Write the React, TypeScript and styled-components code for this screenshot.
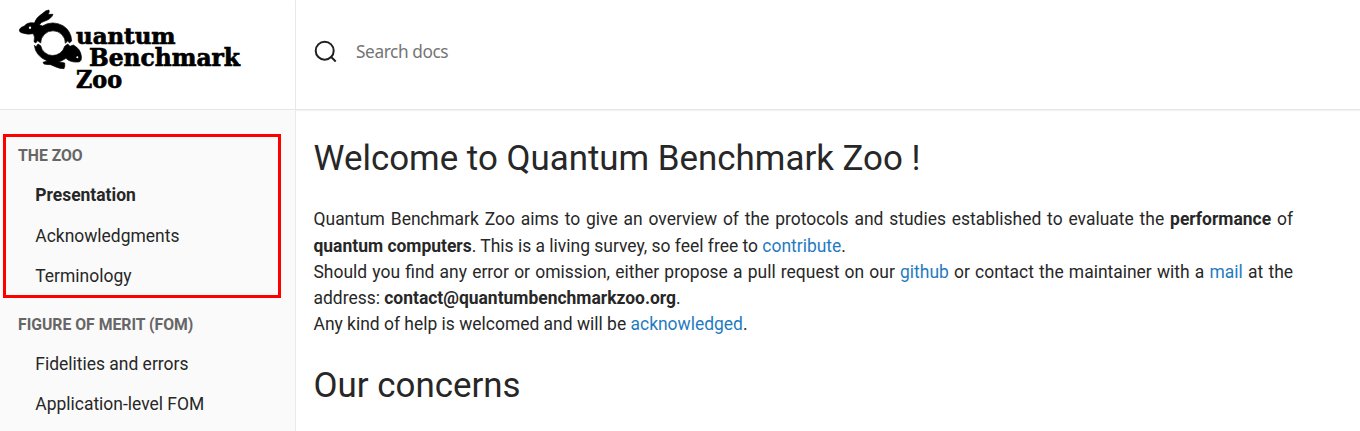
import React from "react";
import styled, { createGlobalStyle } from "styled-components";

const GlobalStyle = createGlobalStyle`
  *, *::before, *::after { box-sizing: border-box; }
  body {
    margin: 0;
    overflow: hidden;
    background: #fff;
    color: #272727;
    font: 17.47px/26.2px Roboto, sans-serif;
  }
`;

const Page = styled.div`
  display: grid;
  grid-template-columns: 296px 1fr;
  grid-template-rows: 110px 321px;
  height: 431px;
  overflow: hidden;
`;

const Brand = styled.header`
  border-right: 1px solid #eaeaea;
  border-bottom: 1px solid #e6e6e6;
`;

const SearchBar = styled.label`
  display: flex;
  align-items: center;
  gap: 18px;
  padding: 0 0 6px 18px;
  border-bottom: 1px solid #e6e6e6;
  box-shadow: 0 1px 1px rgba(0, 0, 0, 0.05);
`;

const SearchInput = styled.input`
  flex: 1;
  padding: 0;
  border: 0;
  outline: 0;
  background: transparent;
  color: #272727;
  font: 17.3px/26px "Noto Sans", sans-serif;
  letter-spacing: -0.42px;
  &::placeholder { color: #757575; opacity: 1; }
`;

const Sidebar = styled.nav`
  padding: 24px 14px 0 3px;
  border-right: 1px solid #eaeaea;
  background: #fafafa;
  overflow: hidden;
`;

const NavGroup = styled.section<{ $outlined?: boolean }>`
  height: 164px;
  padding: 6px 0 0 12px;
  border: 3px solid ${(p) => (p.$outlined ? "#fe0000" : "transparent")};
  & + & { margin-top: 4.65px; }
`;

const NavTitle = styled.h2`
  margin: 0 0 6.3px;
  color: #666;
  font-size: 15.75px;
  font-weight: 700;
  line-height: 26px;
`;

const NavLink = styled.a<{ $active?: boolean }>`
  display: block;
  padding: 7px 0 7px 17.3px;
  color: #272727;
  font-weight: ${(p) => (p.$active ? 700 : 400)};
  line-height: 26.3px;
  text-decoration: none;
`;

const Content = styled.main`
  padding: 22px 67px 0 17.5px;
  overflow: hidden;
`;

const Heading = styled.h1`
  margin: 0 0 21.38px;
  font-size: 34.9px;
  font-weight: 400;
  line-height: 53px;
`;

const Intro = styled.p`
  margin: 0 0 21.3px;
  text-align: justify;
`;

const Link = styled.a`
  color: #1f7bc1;
  text-decoration: none;
`;

const LogoImage = styled.svg`
  display: block;
  width: 250px;
  height: 100px;
`;

const Logo = () => (
  <LogoImage viewBox="0 0 250 100" role="img" aria-label="Quantum Benchmark Zoo">
    <g transform="translate(10 0) scale(.33333)">
      <g stroke="#000" strokeWidth="2" strokeLinejoin="round">
        <path d="M28 90 Q30 82 43 78 Q54 65 73 69 Q77 54 98 40 Q108 30 117 30 Q120 36 114 43 L129 43 Q124 57 105 63 Q93 66 88 74 L97 78 Q127 60 159 77 Q184 93 185 123 L178 129 L174 122 L166 130 A37 37 0 0 0 92 129 L83 122 L77 129 L72 125 Q76 111 70 101 Q52 105 34 98 Q28 96 28 90 Z" />
        <path d="M73 136 L78 140 L84 132 L92 137 A37 37 0 0 0 164 139 L173 132 L180 139 L190 135 Q211 146 214 168 Q216 186 204 186 Q181 188 168 175 Q155 184 145 185 L164 189 Q166 199 162 206 Q148 206 138 201 L122 194 Q110 194 102 192 L99 187 L112 183 Q76 168 73 136 Z" />
      </g>
      <circle cx="60" cy="83" r="3.5" fill="#fff" />
      <circle cx="202" cy="172" r="3" fill="#fff" />
    </g>
    <g fontFamily="'DejaVu Serif', serif" fontWeight="700" fontSize="23.5" stroke="#000" strokeWidth=".7">
      <text x="76" y="44" fontSize="22" textLength="99.5" lengthAdjust="spacingAndGlyphs">uantum</text>
      <text x="89" y="66" textLength="151" lengthAdjust="spacingAndGlyphs">Benchmark</text>
      <text x="76" y="88" textLength="46" lengthAdjust="spacingAndGlyphs">Zoo</text>
    </g>
  </LogoImage>
);

const SearchIcon = () => (
  <svg width="24" height="24" viewBox="0 0 24 24" fill="none" stroke="#202020" strokeWidth="2">
    <circle cx="10.7" cy="10.7" r="9" />
    <path d="m16.7 16.5 5 5" />
  </svg>
);

const groups = [
  { title: "THE ZOO", outlined: true, items: ["Presentation", "Acknowledgments", "Terminology"] },
  { title: "FIGURE OF MERIT (FOM)", outlined: false, items: ["Fidelities and errors", "Application-level FOM"] },
];

export default function App() {
  return (
    <>
      <GlobalStyle />
      <Page>
        <Brand><Logo /></Brand>
        <SearchBar>
          <SearchIcon />
          <SearchInput placeholder="Search docs" />
        </SearchBar>
        <Sidebar>
          {groups.map((group) => (
            <NavGroup key={group.title} $outlined={group.outlined}>
              <NavTitle>{group.title}</NavTitle>
              {group.items.map((item) => (
                <NavLink key={item} $active={item === "Presentation"}>{item}</NavLink>
              ))}
            </NavGroup>
          ))}
        </Sidebar>
        <Content>
          <Heading>Welcome to Quantum Benchmark Zoo !</Heading>
          <Intro>
            Quantum Benchmark Zoo aims to give an overview of the protocols and studies established to evaluate
            the <b>performance</b> of <b>quantum computers</b>. This is a living survey, so feel free
            to <Link>contribute</Link>.
            <br />
            Should you find any error or omission, either propose a pull request on our <Link>github</Link> or
            contact the maintainer with a <Link>mail</Link> at the address: <b>contact@quantumbenchmarkzoo.org</b>.
            <br />
            Any kind of help is welcomed and will be <Link>acknowledged</Link>.
          </Intro>
          <Heading>Our concerns</Heading>
        </Content>
      </Page>
    </>
  );
}
